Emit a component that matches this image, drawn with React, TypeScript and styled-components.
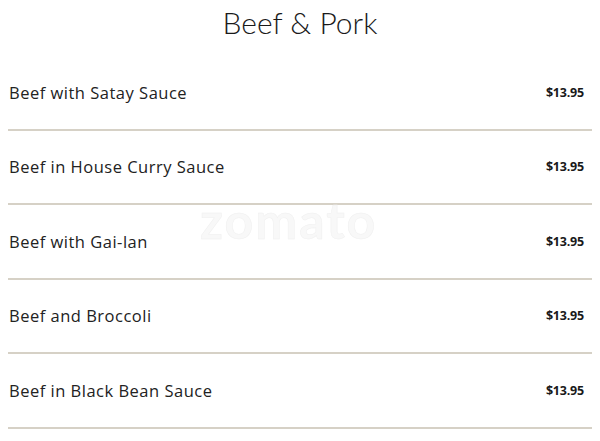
import React from "react";
import styled, { createGlobalStyle } from "styled-components";

const GlobalStyle = createGlobalStyle`
  html, body {
    margin: 0;
    padding: 0;
    background: #fff;
  }
`;

const Page = styled.div`
  position: relative;
  width: 600px;
  height: 441px;
  overflow: hidden;
  background: #fff;
  font-family: 'Lato', 'Liberation Sans', sans-serif;
`;

const Title = styled.h1`
  margin: 0;
  height: 56px;
  display: flex;
  justify-content: center;
  padding-top: 2px;
  box-sizing: border-box;
  font-size: 30px;
  font-weight: 300;
  color: #1a1a1a;
  line-height: 40px;
`;

const List = styled.div`
  display: flex;
  flex-direction: column;
  padding: 0 8px;
`;

const Row = styled.div`
  display: flex;
  align-items: center;
  justify-content: space-between;
  height: 72.5px;
  border-bottom: 2px solid #d6d1c6;
  padding: 0 8px 0 1px;
`;

const Name = styled.span`
  font-family: 'Open Sans', 'Liberation Sans', sans-serif;
  font-size: 16.5px;
  font-weight: 400;
  color: #222;
  letter-spacing: 0.5px;
`;

const Price = styled.span`
  font-family: 'Open Sans', 'Liberation Sans', sans-serif;
  font-size: 12.5px;
  font-weight: 700;
  color: #1a1a1a;
  letter-spacing: -0.2px;
`;

const Watermark = styled.div`
  position: absolute;
  left: 200px;
  top: 190px;
  font-family: 'Lato', sans-serif;
  font-size: 50px;
  font-weight: 700;
  color: #f8f8f8;
  letter-spacing: 2px;
  -webkit-text-stroke: 0.5px #f0f0f0;
  pointer-events: none;
`;

const items = [
  "Beef with Satay Sauce",
  "Beef in House Curry Sauce",
  "Beef with Gai-lan",
  "Beef and Broccoli",
  "Beef in Black Bean Sauce",
];

export default function App() {
  return (
    <Page>
      <GlobalStyle />
      <Title>Beef &amp; Pork</Title>
      <List>
        {items.map((name) => (
          <Row key={name}>
            <Name>{name}</Name>
            <Price>$13.95</Price>
          </Row>
        ))}
      </List>
      <Watermark>zomato</Watermark>
    </Page>
  );
}
